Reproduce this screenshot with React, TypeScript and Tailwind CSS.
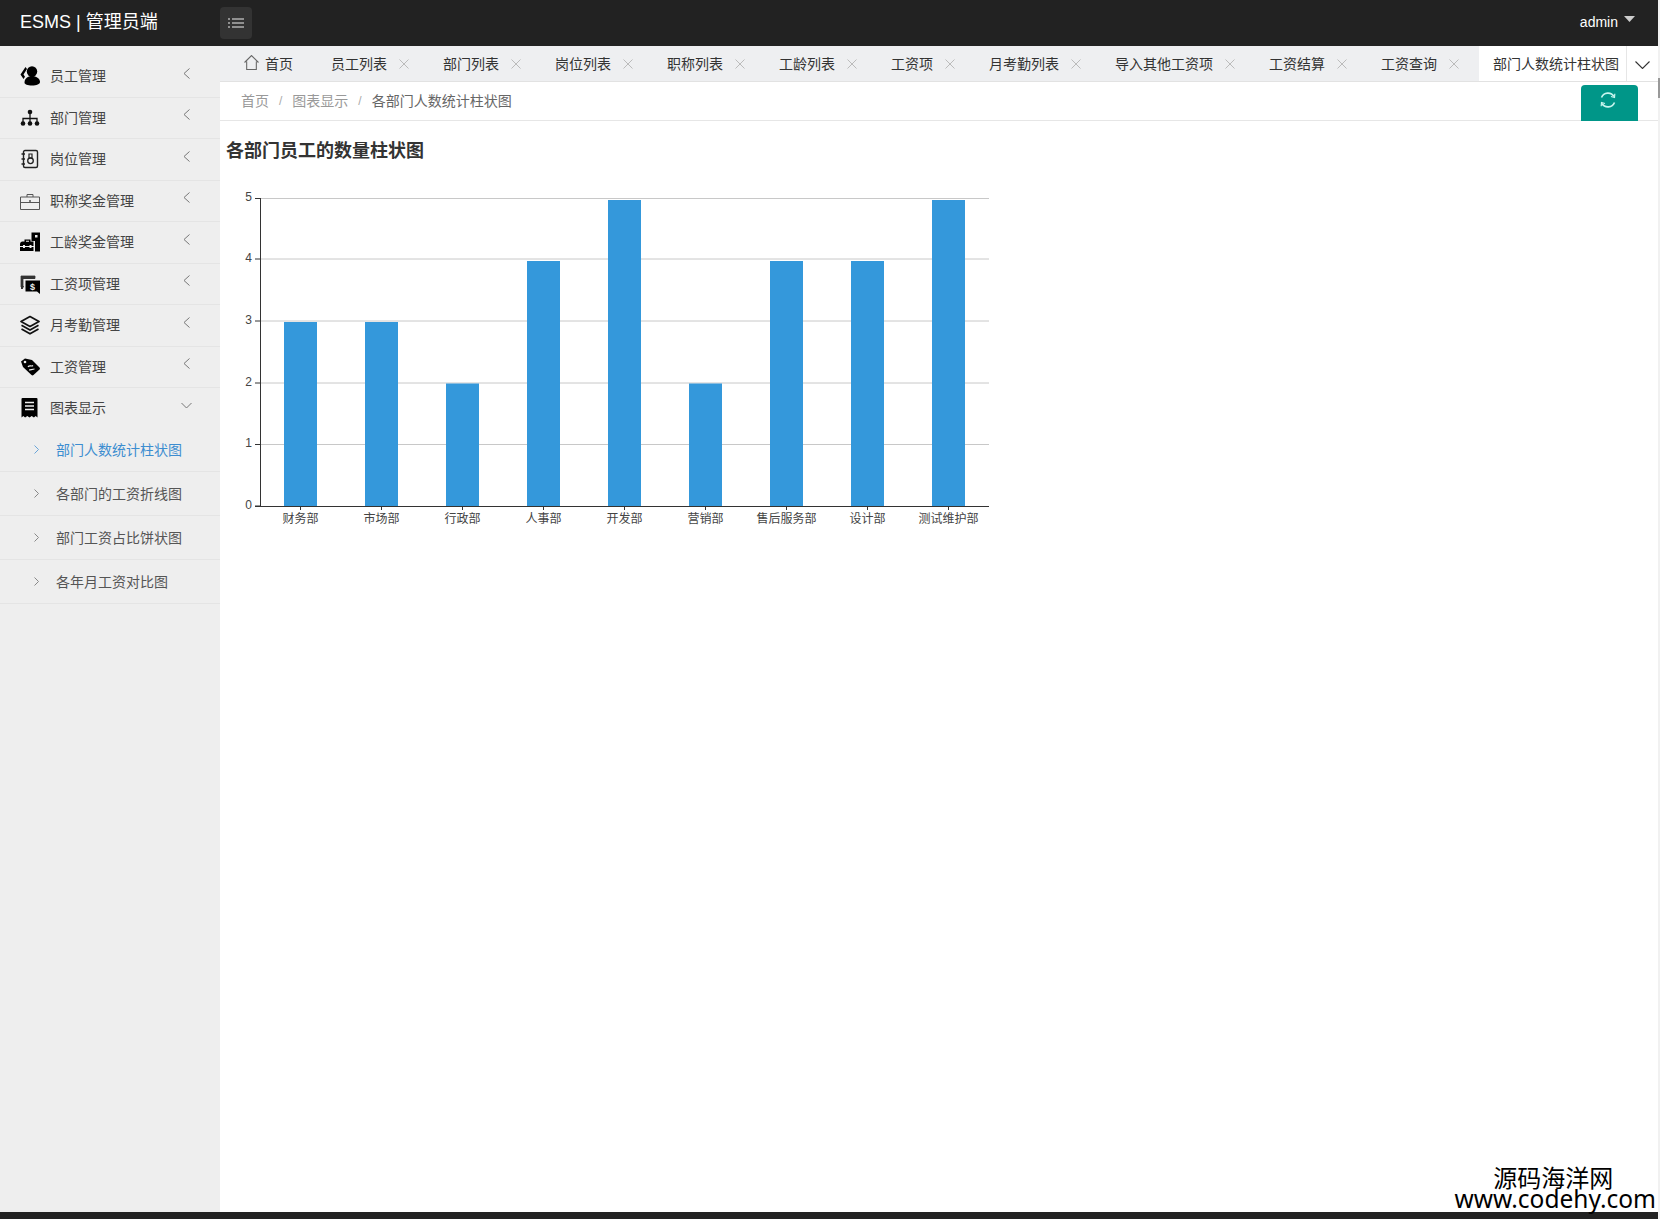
import type { ReactNode } from "react";

const font = "font-['Liberation_Sans','Noto_Sans_CJK_SC',sans-serif]";

const UserIcon = () => (
  <svg viewBox="0 0 20 20" className="w-5 h-5">
    <circle cx="12" cy="5.500" r="5.200" fill="#000" />
    <path d="M4.500 16.500c0-4 3.500-6.500 7.500-6.500s8 2.500 8 6c0 2-3.500 3.500-8 3.500s-7.500-1-7.500-3z" fill="#000" />
    <path d="M5.500 1 .5 8.500 3.500 13l1.500-2.200L3.500 8.500 7 3z" fill="#000" />
  </svg>
);

const OrgIcon = () => (
  <svg viewBox="0 0 20 20" className="w-5 h-5">
    <circle cx="10" cy="4" r="2.300" fill="#111" />
    <path d="M10 5v9M3 14v-3.500h14V14" stroke="#111" strokeWidth="1.300" fill="none" />
    <circle cx="3" cy="15.500" r="2.300" fill="#111" />
    <circle cx="10" cy="15.500" r="2.300" fill="#111" />
    <circle cx="17" cy="15.500" r="2.300" fill="#111" />
  </svg>
);

const BookIcon = () => (
  <svg viewBox="0 0 20 20" className="w-5 h-5">
    <rect x="3.500" y="1.500" width="14" height="17" rx="1.500" fill="none" stroke="#222" strokeWidth="1.400" />
    <path d="M1.500 5h3.500M1.500 10h3.500M1.500 15h3.500" stroke="#222" strokeWidth="1.500" />
    <circle cx="10.500" cy="11.800" r="2.800" fill="none" stroke="#222" strokeWidth="1.300" />
    <path d="M9 5h3v4H9z" fill="none" stroke="#222" strokeWidth="1.200" />
  </svg>
);

const CaseIcon = () => (
  <svg viewBox="0 0 20 20" className="w-5 h-5">
    <path d="M.5 6h19v12.500H.5zM.5 11.500h19M7 6V3.500h6V6" fill="none" stroke="#555" strokeWidth="1" />
    <circle cx="10" cy="10" r="1" fill="#555" />
  </svg>
);

const SeniorityIcon = () => (
  <svg viewBox="0 0 20 20" className="w-5 h-5">
    <path d="M11.500 .5H20v19h-5V9h-3.500z" fill="#000" />
    <rect x="15" y="3" width="2.500" height="2.500" fill="#eee" />
    <path d="M0 12.500c0-2 1-3 2.500-3H4.500V7.500h6v2H13.500V19H0z" fill="#000" />
    <path d="M6 8.800h3v1H6zM0 14h14v1H0z" fill="#eee" />
    <rect x="3" y="13" width="2" height="3" fill="#eee" />
    <rect x="9.500" y="13" width="2" height="3" fill="#eee" />
  </svg>
);

const PayItemIcon = () => (
  <svg viewBox="0 0 20 20" className="w-5 h-5">
    <path d="M1 2h14v3H3v10H1z" fill="#333" />
    <path d="M1 2h14v2.500H3V12l1 1H1z" fill="none" stroke="#333" strokeWidth=".8" />
    <path d="M5.500 6.500H20V20l-3-2.500H5.500z" fill="#000" />
    <text x="12.500" y="15.500" fontSize="9" fill="#eee" textAnchor="middle" fontFamily="Liberation Sans" fontWeight="700">$</text>
  </svg>
);

const LayersIcon = () => (
  <svg viewBox="0 0 20 20" className="w-5 h-5">
    <path d="M10 1.500 19 6.500 10 11.500 1 6.500z" fill="none" stroke="#111" strokeWidth="1.700" strokeLinejoin="round" />
    <path d="M1.500 10.300 10 15l8.500-4.700M1.500 14 10 18.700 18.500 14" fill="none" stroke="#111" strokeWidth="1.700" />
  </svg>
);

const TagIcon = () => (
  <svg viewBox="0 0 20 20" className="w-5 h-5">
    <path d="M1 4.500 5 1.500l7 1.500 7.500 7.500a1.500 1.500 0 0 1 0 2L13.500 18a1.500 1.500 0 0 1-2 0L3 10z" fill="#000" />
    <circle cx="5" cy="5" r="1.300" fill="#eee" />
    <path d="M8 10c1.500-2.500 3.500 0 5-1.500M9 13c1.500 0 3.500-1 5.500-1" stroke="#eee" strokeWidth="1.200" fill="none" />
  </svg>
);

const ReceiptIcon = () => (
  <svg viewBox="0 0 20 20" className="w-5 h-5">
    <path d="M2.500 0h14a1 1 0 0 1 1 1V19.500l-1.800-1.500-1.800 1.500-2.200-1.500-2.200 1.500-2.200-1.500-2.200 1.500L3.300 18l-1.800 1.500V1a1 1 0 0 1 1-1z" fill="#000" />
    <path d="M5 4.500h9M5 8h9M5 11.500h9" stroke="#eee" strokeWidth="1.500" />
  </svg>
);

const menu: { label: string; icon: ReactNode }[] = [
  { label: "员工管理", icon: <UserIcon /> },
  { label: "部门管理", icon: <OrgIcon /> },
  { label: "岗位管理", icon: <BookIcon /> },
  { label: "职称奖金管理", icon: <CaseIcon /> },
  { label: "工龄奖金管理", icon: <SeniorityIcon /> },
  { label: "工资项管理", icon: <PayItemIcon /> },
  { label: "月考勤管理", icon: <LayersIcon /> },
  { label: "工资管理", icon: <TagIcon /> },
];

const subMenu = ["部门人数统计柱状图", "各部门的工资折线图", "部门工资占比饼状图", "各年月工资对比图"];

const tabs = ["员工列表", "部门列表", "岗位列表", "职称列表", "工龄列表", "工资项", "月考勤列表", "导入其他工资项", "工资结算", "工资查询"];

const chartData = [
  { name: "财务部", value: 3 },
  { name: "市场部", value: 3 },
  { name: "行政部", value: 2 },
  { name: "人事部", value: 4 },
  { name: "开发部", value: 5 },
  { name: "营销部", value: 2 },
  { name: "售后服务部", value: 4 },
  { name: "设计部", value: 4 },
  { name: "测试维护部", value: 5 },
];

function Sidebar() {
  return (
    <aside className="w-[220px] shrink-0 bg-[#eeeeee] pt-[10px]">
      {menu.map((item) => (
        <div key={item.label} className="h-[41.5px] flex items-center pl-5 border-b border-[#e4e4e4] text-sm text-[#444]">
          <span className="w-[30px] shrink-0">{item.icon}</span>
          <span>{item.label}</span>
          <svg viewBox="0 0 7 11" className="w-[7px] h-[11px] ml-auto mr-[30px] -mt-[6px]">
            <path d="M6.500 .5 1 5.500l5.500 5" fill="none" stroke="#777" strokeWidth="1" />
          </svg>
        </div>
      ))}
      <div className="h-10 flex items-center pl-5 text-sm text-[#444]">
        <span className="w-[30px] shrink-0"><ReceiptIcon /></span>
        <span>图表显示</span>
        <svg viewBox="0 0 11 7" className="w-[11px] h-[7px] ml-auto mr-[28px] -mt-[6px]">
          <path d="M.5 1 5.500 6l5-5" fill="none" stroke="#777" strokeWidth="1" />
        </svg>
      </div>
      {subMenu.map((label, i) => (
        <div
          key={label}
          className={`h-11 flex items-center pl-[34px] border-b border-[#e4e4e4] text-sm ${i === 0 ? "text-[#3c8dd0]" : "text-[#555]"}`}
        >
          <svg viewBox="0 0 5 9" className="w-[5px] h-[9px] mr-[17px]">
            <path d="M.5 .5 4.500 4.500l-4 4" fill="none" stroke={i === 0 ? "#6aa5d8" : "#888"} strokeWidth="1" />
          </svg>
          <span>{label}</span>
        </div>
      ))}
    </aside>
  );
}

function TabBar() {
  return (
    <div className="h-9 shrink-0 flex bg-[#eeeff1] border-b border-[#e2e2e2] text-sm text-[#333]">
      <div className="flex items-center pl-6 pr-6">
        <svg viewBox="0 0 14 14" className="w-[15px] h-[15px] mr-[6px] -mt-[3px]">
          <path d="M.5 7 7 .5 13.500 7M2.500 6v7.500h9V6" fill="none" stroke="#666" strokeWidth="1" />
        </svg>
        <span>首页</span>
      </div>
      {tabs.map((tab) => (
        <div key={tab} className="flex items-center pl-[14px] pr-5">
          <span>{tab}</span>
          <svg viewBox="0 0 10 10" className="w-[10px] h-[10px] ml-3">
            <path d="M.5 .5l9 9M9.500 .5l-9 9" stroke="#bbb" strokeWidth="1" />
          </svg>
        </div>
      ))}
      <div className="w-[147px] flex items-center pl-[14px] bg-white">部门人数统计柱状图</div>
      <div className="flex-1 flex items-center justify-center bg-white border-l border-[#e6e6e6]">
        <svg viewBox="0 0 15 8" className="w-[15px] h-2 mt-[3px]">
          <path d="M.5 .5 7.500 7.500l7-7" fill="none" stroke="#333" strokeWidth="1.100" />
        </svg>
      </div>
    </div>
  );
}

function Breadcrumb() {
  return (
    <div className="h-[39px] shrink-0 flex items-center pl-[21px] pr-5 border-b border-[#e6e6e6] text-sm text-[#999]">
      <span>首页</span>
      <span className="mx-[10px] text-[#aaa] text-xs">/</span>
      <span>图表显示</span>
      <span className="mx-[10px] text-[#aaa] text-xs">/</span>
      <span className="text-[#666]">各部门人数统计柱状图</span>
      <button className="ml-auto mt-[3px] w-[57px] h-9 self-start bg-[#009688] rounded-t-sm flex items-center justify-center pb-[6px] pr-[3px]">
        <svg viewBox="0 0 18 18" className="w-[18px] h-[18px]">
          <path d="M2.500 6.500A7 7 0 0 1 15 5.500M15.500 11.500A7 7 0 0 1 3 12.500" fill="none" stroke="#c8f5ee" strokeWidth="1.600" />
          <path d="M15.800 2.800 15.500 6.500 12 5.500M2.200 15.200 2.500 11.500 6 12.500" fill="none" stroke="#c8f5ee" strokeWidth="1.200" />
        </svg>
      </button>
    </div>
  );
}

function BarChart() {
  // pixel positions inside the chart's svg
  const ys = [326, 264.500, 203, 141, 79, 18.500];
  const barTops = [326, 264, 203.500, 142, 81, 20];
  return (
    <svg width="800" height="360" className="mt-4" fontFamily="Liberation Sans, Noto Sans CJK SC, sans-serif">
      {ys.slice(1).map((y) => (
        <line key={y} x1="40" x2="769" y1={y} y2={y} stroke="#c8c8c8" strokeWidth="1" />
      ))}
      {chartData.map((d, i) => {
        const cx = 80.500 + i * 81;
        return (
          <g key={d.name}>
            <rect x={cx - 16.500} y={barTops[d.value]} width="33" height={326 - barTops[d.value]} fill="#3498db" />
            <line x1={cx} x2={cx} y1="326" y2="330" stroke="#333" />
            <text x={cx} y="343" fontSize="12" fill="#444" textAnchor="middle">{d.name}</text>
          </g>
        );
      })}
      <line x1="40.500" x2="40.500" y1="18" y2="326" stroke="#333" />
      <line x1="35" x2="769" y1="326.500" y2="326.500" stroke="#333" />
      {ys.map((y, i) => (
        <g key={i}>
          <line x1="35" x2="40" y1={y} y2={y} stroke="#333" />
          <text x="32" y={y + 2.500} fontSize="12" fill="#444" textAnchor="end">{i}</text>
        </g>
      ))}
    </svg>
  );
}

export default function App() {
  return (
    <div className={`relative h-[1219px] flex overflow-hidden bg-white ${font}`}>
      <div className="flex-1 flex flex-col min-w-0">
        <header className="h-[46px] shrink-0 bg-[#222222] flex items-center text-white">
          <div className="w-[220px] pl-5 text-lg -mt-[3px]">ESMS | 管理员端</div>
          <button className="w-8 h-8 rounded-sm bg-[#333333] flex items-center justify-center">
            <svg viewBox="0 0 16 10" className="w-4 h-[10px]">
              <path d="M0 1h2M4 1h12M0 5h2M4 5h12M0 9h2M4 9h12" stroke="#eee" strokeWidth="1.100" />
            </svg>
          </button>
          <div className="ml-auto mr-[23px] flex items-center text-sm -mt-[3px]">
            admin
            <svg viewBox="0 0 11 6" className="w-[11px] h-[6px] ml-[6px] -mt-[5px]">
              <path d="M0 0h11L5.500 6z" fill="#ccc" />
            </svg>
          </div>
        </header>
        <div className="flex-1 flex min-h-0">
          <Sidebar />
          <main className="flex-1 flex flex-col min-w-0">
            <TabBar />
            <Breadcrumb />
            <div className="pt-[17px]">
              <h2 className="pl-[6px] text-lg leading-[26px] font-bold text-[#333]">各部门员工的数量柱状图</h2>
              <BarChart />
            </div>
          </main>
        </div>
        <footer className="h-[7px] shrink-0 bg-[#222222]" />
      </div>
      <div className="w-[2px] shrink-0 bg-[#f1f1f1]">
        <div className="mt-[78px] h-5 bg-[#999999]" />
      </div>
      {/* site watermark */}
      <div className="absolute right-1 bottom-[9px] flex flex-col items-center text-black font-['Noto_Sans','Noto_Sans_CJK_SC',sans-serif]">
        <span className="text-2xl leading-[22px] font-['Noto_Sans_CJK_SC',sans-serif] -translate-x-[2px]">源码海洋网</span>
        <span className="text-[24.5px] leading-[22px]">www.codehy.com</span>
      </div>
    </div>
  );
}
